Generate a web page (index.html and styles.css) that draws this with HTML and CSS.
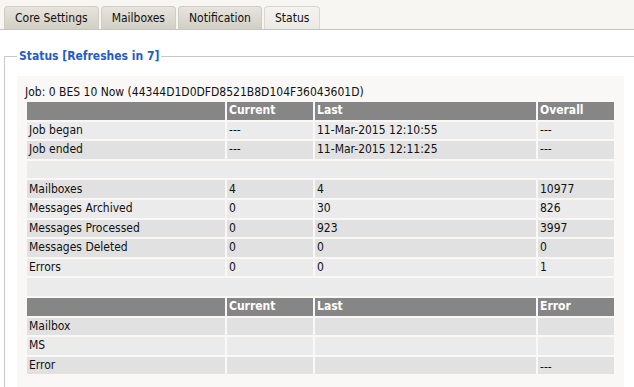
FILE: index.html
```html
<!DOCTYPE html>
<html>
<head>
<meta charset="utf-8">
<link rel="stylesheet" href="styles.css">
</head>
<body>
<div class="tabbar">
  <div class="tab">Core Settings</div>
  <div class="tab">Mailboxes</div>
  <div class="tab">Notification</div>
  <div class="tab active">Status</div>
</div>
<fieldset class="box">
  <legend class="legend">Status [Refreshes in 7]</legend>
  <div class="panel">
    <div class="job">Job: 0 BES 10 Now (44344D1D0DFD8521B8D104F36043601D)</div>
    <table class="grid">
      <colgroup>
        <col class="c1"><col class="c2"><col class="c3"><col class="c4">
      </colgroup>
      <tr class="head"><td></td><td>Current</td><td>Last</td><td>Overall</td></tr>
      <tr class="l"><td>Job began</td><td>---</td><td>11-Mar-2015 12:10:55</td><td>---</td></tr>
      <tr class="d"><td>Job ended</td><td>---</td><td>11-Mar-2015 12:11:25</td><td>---</td></tr>
      <tr class="l"><td colspan="4"></td></tr>
      <tr class="d"><td>Mailboxes</td><td>4</td><td>4</td><td>10977</td></tr>
      <tr class="l"><td>Messages Archived</td><td>0</td><td>30</td><td>826</td></tr>
      <tr class="d"><td>Messages Processed</td><td>0</td><td>923</td><td>3997</td></tr>
      <tr class="d"><td>Messages Deleted</td><td>0</td><td>0</td><td>0</td></tr>
      <tr class="l"><td>Errors</td><td>0</td><td>0</td><td>1</td></tr>
      <tr class="l"><td colspan="4"></td></tr>
      <tr class="head"><td></td><td>Current</td><td>Last</td><td>Error</td></tr>
      <tr class="d"><td>Mailbox</td><td></td><td></td><td></td></tr>
      <tr class="l"><td>MS</td><td></td><td></td><td></td></tr>
      <tr class="d"><td>Error</td><td></td><td></td><td class="low">---</td></tr>
    </table>
  </div>
</fieldset>
</body>
</html>
```

FILE: styles.css
```css
html, body {
  margin: 0;
  padding: 0;
  background: #ffffff;
  overflow: hidden;
}
body {
  font-family: "DejaVu Sans Condensed", "DejaVu Sans", sans-serif;
  font-stretch: condensed;
  font-size: 12px;
  color: #111111;
}
.tabbar {
  height: 29px;
  background: #f7f6f3;
  border-bottom: 1px solid #c4c4c4;
  display: flex;
  align-items: flex-end;
  gap: 2px;
  padding-left: 4px;
  box-sizing: content-box;
}
.tab {
  height: 22px;
  line-height: 23px;
  padding: 0 10px;
  border: 1px solid #cfccc3;
  border-bottom: none;
  border-radius: 4px 4px 0 0;
  background: linear-gradient(#e6e4dd, #d2cfc5);
  color: #111111;
  font-size: 12px;
}
.tab.active {
  background: linear-gradient(#f4f3f0, #ebe9e4);
  border-color: #d8d6d0;
}
.box {
  margin: 19px -30px 0 4px;
  padding: 0 0 0 12px;
  border: 1px solid #c9c9c9;
  border-right: none;
  border-bottom: none;
  min-width: 0;
}
.legend {
  padding: 0 2px;
  color: #1f5cc8;
  font-weight: bold;
  font-size: 12px;
}
.panel {
  width: 591px;
  background: #f9f8f6;
  padding: 9px 8px 20px 8px;
  margin-top: 13px;
}
.job {
  line-height: 15px;
  height: 15px;
}
.grid {
  border-collapse: separate;
  border-spacing: 2px;
  width: 591px;
  table-layout: fixed;
}
.c1 { width: 198px; }
.c2 { width: 86px; }
.c3 { width: 221px; }
.c4 { width: 76px; }
.grid td {
  height: 17.6px;
  padding: 0 2px;
  line-height: 17px;
  white-space: nowrap;
  overflow: hidden;
}
.head td {
  background: #868686;
  color: #ffffff;
  font-weight: bold;
}
.l td { background: #ebebeb; }
.d td { background: #e1e1e1; }
.grid td.low { vertical-align: bottom; line-height: 14px; }
```
